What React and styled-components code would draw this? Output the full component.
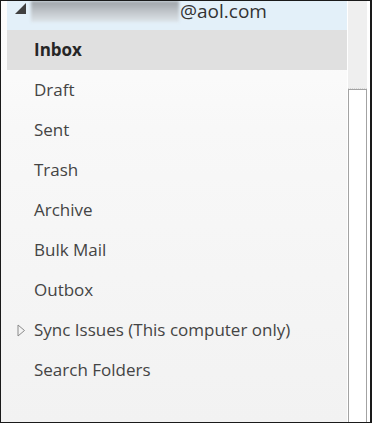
import React from "react";
import styled, { createGlobalStyle } from "styled-components";

const Global = createGlobalStyle`
  html, body {
    margin: 0;
    padding: 0;
    background: #ffffff;
  }
  * {
    box-sizing: border-box;
  }
`;

const Frame = styled.div`
  width: 372px;
  height: 423px;
  display: flex;
  border-top: 1px solid #1a1a1a;
  border-left: 1px solid #1a1a1a;
  border-bottom: 1px solid #1a1a1a;
  border-right: 2px solid #1a1a1a;
  background: #ffffff;
  overflow: hidden;
  font-family: "Open Sans", "Noto Sans", sans-serif;
`;

const Tree = styled.div`
  flex: 1;
  display: flex;
  flex-direction: column;
  padding-left: 6px;
  background: linear-gradient(180deg, #fdfdfd 0%, #f8f8f8 30%, #f2f2f2 100%);
`;

const AccountRow = styled.div`
  height: 29px;
  display: flex;
  align-items: flex-start;
  background: #e3f0f9;
`;

const Caret = styled.svg`
  width: 12px;
  height: 12px;
  margin: 2px 0 0 8px;
  flex: none;
`;

const Blur = styled.div`
  width: 148px;
  height: 21px;
  margin-left: 4px;
  flex: none;
  background: linear-gradient(180deg, #9da2a7 0%, #c3c8cd 55%, #dde4ea 100%);
  filter: blur(1.5px);
`;

const Address = styled.span`
  font-size: 19px;
  line-height: 20px;
  margin-left: 1px;
  color: #333333;
  white-space: nowrap;
`;

const Row = styled.div`
  height: 40px;
  display: flex;
  align-items: center;
  padding-bottom: 2px;
  padding-left: ${(p) => (p.$expander ? "10px" : "27px")};
  background: ${(p) => (p.$selected ? "#e0e0e0" : "transparent")};
  color: ${(p) => (p.$selected ? "#262626" : "#444444")};
  font-weight: ${(p) => (p.$selected ? 700 : 400)};
  font-size: 17px;
  white-space: nowrap;
`;

const Expander = styled.svg`
  width: 9px;
  height: 13px;
  margin: 2px 8px 0 0;
  flex: none;
`;

const Gutter = styled.div`
  width: 1px;
  background: #ffffff;
`;

const Scrollbar = styled.div`
  width: 19px;
  display: flex;
  flex-direction: column;
  background: #efefef;
`;

const Track = styled.div`
  height: 88px;
  border-bottom: 1px dotted #d6d6d6;
`;

const Thumb = styled.div`
  flex: 1;
  background: #ffffff;
  border: 1px solid #a3a3a3;
  border-bottom: none;
`;

const Edge = styled.div`
  width: 3px;
  background: #ffffff;
`;

const folders = [
  "Draft",
  "Sent",
  "Trash",
  "Archive",
  "Bulk Mail",
  "Outbox",
];

export default function App() {
  return (
    <>
      <Global />
      <Frame>
        <Tree>
          <AccountRow>
            <Caret viewBox="0 0 12 12">
              <polygon points="0,11 11,11 11,0" fill="#404040" />
            </Caret>
            <Blur />
            <Address>@aol.com</Address>
          </AccountRow>
          <Row $selected>Inbox</Row>
          {folders.map((name) => (
            <Row key={name}>{name}</Row>
          ))}
          <Row $expander>
            <Expander viewBox="0 0 9 13">
              <polygon
                points="1,1 7.5,6.5 1,12"
                fill="none"
                stroke="#8a8a8a"
                strokeWidth="1"
              />
            </Expander>
            Sync Issues (This computer only)
          </Row>
          <Row>Search Folders</Row>
        </Tree>
        <Gutter />
        <Scrollbar>
          <Track />
          <Thumb />
        </Scrollbar>
        <Edge />
      </Frame>
    </>
  );
}
